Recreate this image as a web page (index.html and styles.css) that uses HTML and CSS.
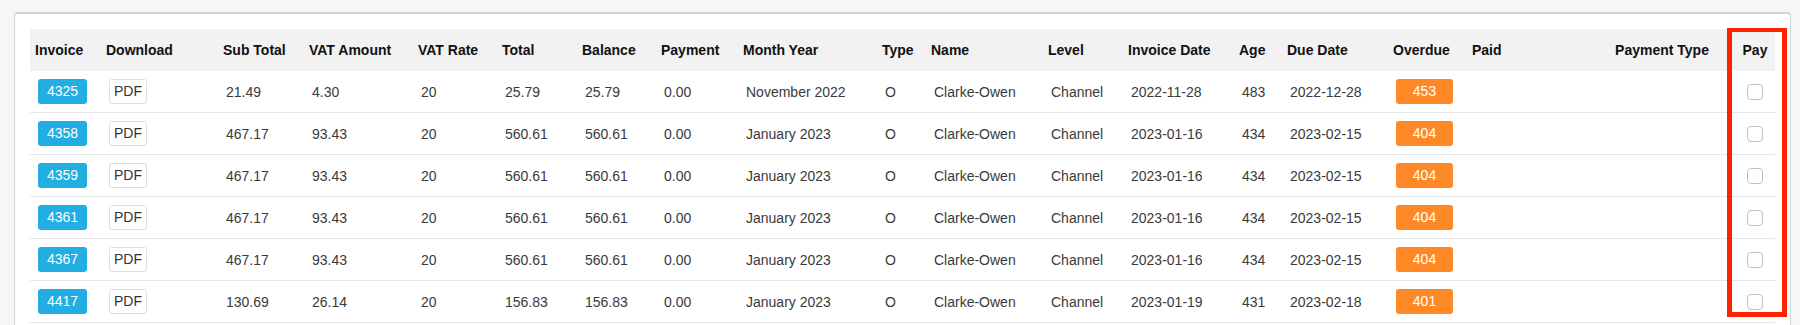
FILE: index.html
```html
<!DOCTYPE html>
<html lang="en">
<head>
<meta charset="utf-8">
<title>Invoices</title>
<link rel="stylesheet" href="styles.css">
</head>
<body>
<div class="panel">
  <table class="invoices">
    <colgroup>
      <col style="width:71px"><col style="width:117px"><col style="width:86px"><col style="width:109px">
      <col style="width:84px"><col style="width:80px"><col style="width:79px"><col style="width:82px">
      <col style="width:139px"><col style="width:49px"><col style="width:117px"><col style="width:80px">
      <col style="width:111px"><col style="width:48px"><col style="width:106px"><col style="width:79px">
      <col style="width:122px"><col style="width:146px"><col style="width:40px">
    </colgroup>
    <thead>
      <tr>
        <th>Invoice</th><th>Download</th><th>Sub Total</th><th>VAT Amount</th><th>VAT Rate</th>
        <th>Total</th><th>Balance</th><th>Payment</th><th>Month Year</th><th>Type</th><th>Name</th>
        <th>Level</th><th>Invoice Date</th><th>Age</th><th>Due Date</th><th>Overdue</th><th>Paid</th>
        <th class="center">Payment Type</th><th class="center">Pay</th>
      </tr>
    </thead>
    <tbody>
      <tr>
        <td><span class="inv">4325</span></td><td><span class="pdf">PDF</span></td>
        <td>21.49</td><td>4.30</td><td>20</td><td>25.79</td><td>25.79</td><td>0.00</td>
        <td>November 2022</td><td>O</td><td>Clarke-Owen</td><td>Channel</td><td>2022-11-28</td>
        <td>483</td><td>2022-12-28</td><td><span class="due">453</span></td><td></td><td></td>
        <td class="center"><input type="checkbox" class="chk"></td>
      </tr>
      <tr>
        <td><span class="inv">4358</span></td><td><span class="pdf">PDF</span></td>
        <td>467.17</td><td>93.43</td><td>20</td><td>560.61</td><td>560.61</td><td>0.00</td>
        <td>January 2023</td><td>O</td><td>Clarke-Owen</td><td>Channel</td><td>2023-01-16</td>
        <td>434</td><td>2023-02-15</td><td><span class="due">404</span></td><td></td><td></td>
        <td class="center"><input type="checkbox" class="chk"></td>
      </tr>
      <tr>
        <td><span class="inv">4359</span></td><td><span class="pdf">PDF</span></td>
        <td>467.17</td><td>93.43</td><td>20</td><td>560.61</td><td>560.61</td><td>0.00</td>
        <td>January 2023</td><td>O</td><td>Clarke-Owen</td><td>Channel</td><td>2023-01-16</td>
        <td>434</td><td>2023-02-15</td><td><span class="due">404</span></td><td></td><td></td>
        <td class="center"><input type="checkbox" class="chk"></td>
      </tr>
      <tr>
        <td><span class="inv">4361</span></td><td><span class="pdf">PDF</span></td>
        <td>467.17</td><td>93.43</td><td>20</td><td>560.61</td><td>560.61</td><td>0.00</td>
        <td>January 2023</td><td>O</td><td>Clarke-Owen</td><td>Channel</td><td>2023-01-16</td>
        <td>434</td><td>2023-02-15</td><td><span class="due">404</span></td><td></td><td></td>
        <td class="center"><input type="checkbox" class="chk"></td>
      </tr>
      <tr>
        <td><span class="inv">4367</span></td><td><span class="pdf">PDF</span></td>
        <td>467.17</td><td>93.43</td><td>20</td><td>560.61</td><td>560.61</td><td>0.00</td>
        <td>January 2023</td><td>O</td><td>Clarke-Owen</td><td>Channel</td><td>2023-01-16</td>
        <td>434</td><td>2023-02-15</td><td><span class="due">404</span></td><td></td><td></td>
        <td class="center"><input type="checkbox" class="chk"></td>
      </tr>
      <tr>
        <td><span class="inv">4417</span></td><td><span class="pdf">PDF</span></td>
        <td>130.69</td><td>26.14</td><td>20</td><td>156.83</td><td>156.83</td><td>0.00</td>
        <td>January 2023</td><td>O</td><td>Clarke-Owen</td><td>Channel</td><td>2023-01-19</td>
        <td>431</td><td>2023-02-18</td><td><span class="due">401</span></td><td></td><td></td>
        <td class="center"><input type="checkbox" class="chk"></td>
      </tr>
    </tbody>
  </table>
  <div class="highlight"></div>
</div>
</body>
</html>
```
FILE: styles.css
```css
html, body {
  margin: 0;
  padding: 0;
  background: #f6f6f6;
}
body {
  padding: 12px 9px 0 14px;
  font-family: "Liberation Sans", Arial, Helvetica, sans-serif;
  font-size: 14px;
  color: #333;
}
.panel {
  position: relative;
  background: #fff;
  border: 1px solid #cad7de;
  border-top-width: 2px;
  border-radius: 4px 4px 0 0;
  padding: 15px 15px 15px 15px;
}
.invoices {
  width: 1745px;
  table-layout: fixed;
  border-collapse: separate;
  border-spacing: 0;
}
.invoices thead tr {
  height: 42px;
}
.invoices th {
  background: #f2f2f2;
  color: #111;
  font-weight: bold;
  text-align: left;
  padding: 0 0 0 5px;
  white-space: nowrap;
  vertical-align: middle;
}
.invoices tbody tr {
  height: 42px;
}
.invoices td {
  padding: 0 0 0 8px;
  border-bottom: 1px solid #e6e6e6;
  vertical-align: middle;
  white-space: nowrap;
  color: #3a3a3a;
}
.invoices th.center,
.invoices td.center {
  text-align: center;
  padding: 0;
}
.inv {
  display: inline-block;
  background: #22aee2;
  color: #fff;
  line-height: 25px;
  padding: 0 9px;
  border-radius: 3px;
}
.pdf {
  display: inline-block;
  background: #fff;
  border: 1px solid #dedede;
  border-radius: 3px;
  line-height: 23px;
  padding: 0 4px;
  color: #333;
}
.due {
  display: inline-block;
  background: #ff8826;
  color: #fff;
  width: 57px;
  text-align: center;
  line-height: 25px;
  border-radius: 3px;
}
.chk {
  appearance: none;
  -webkit-appearance: none;
  width: 16px;
  height: 16px;
  margin: 0;
  border: 1px solid #c2c2c2;
  border-radius: 4px;
  background: #fff;
  vertical-align: middle;
}
.highlight {
  position: absolute;
  left: 1712px;
  top: 14px;
  width: 60px;
  height: 289px;
  box-sizing: border-box;
  border: 5px solid #ff2200;
  border-top-width: 4px;
  pointer-events: none;
}
```
